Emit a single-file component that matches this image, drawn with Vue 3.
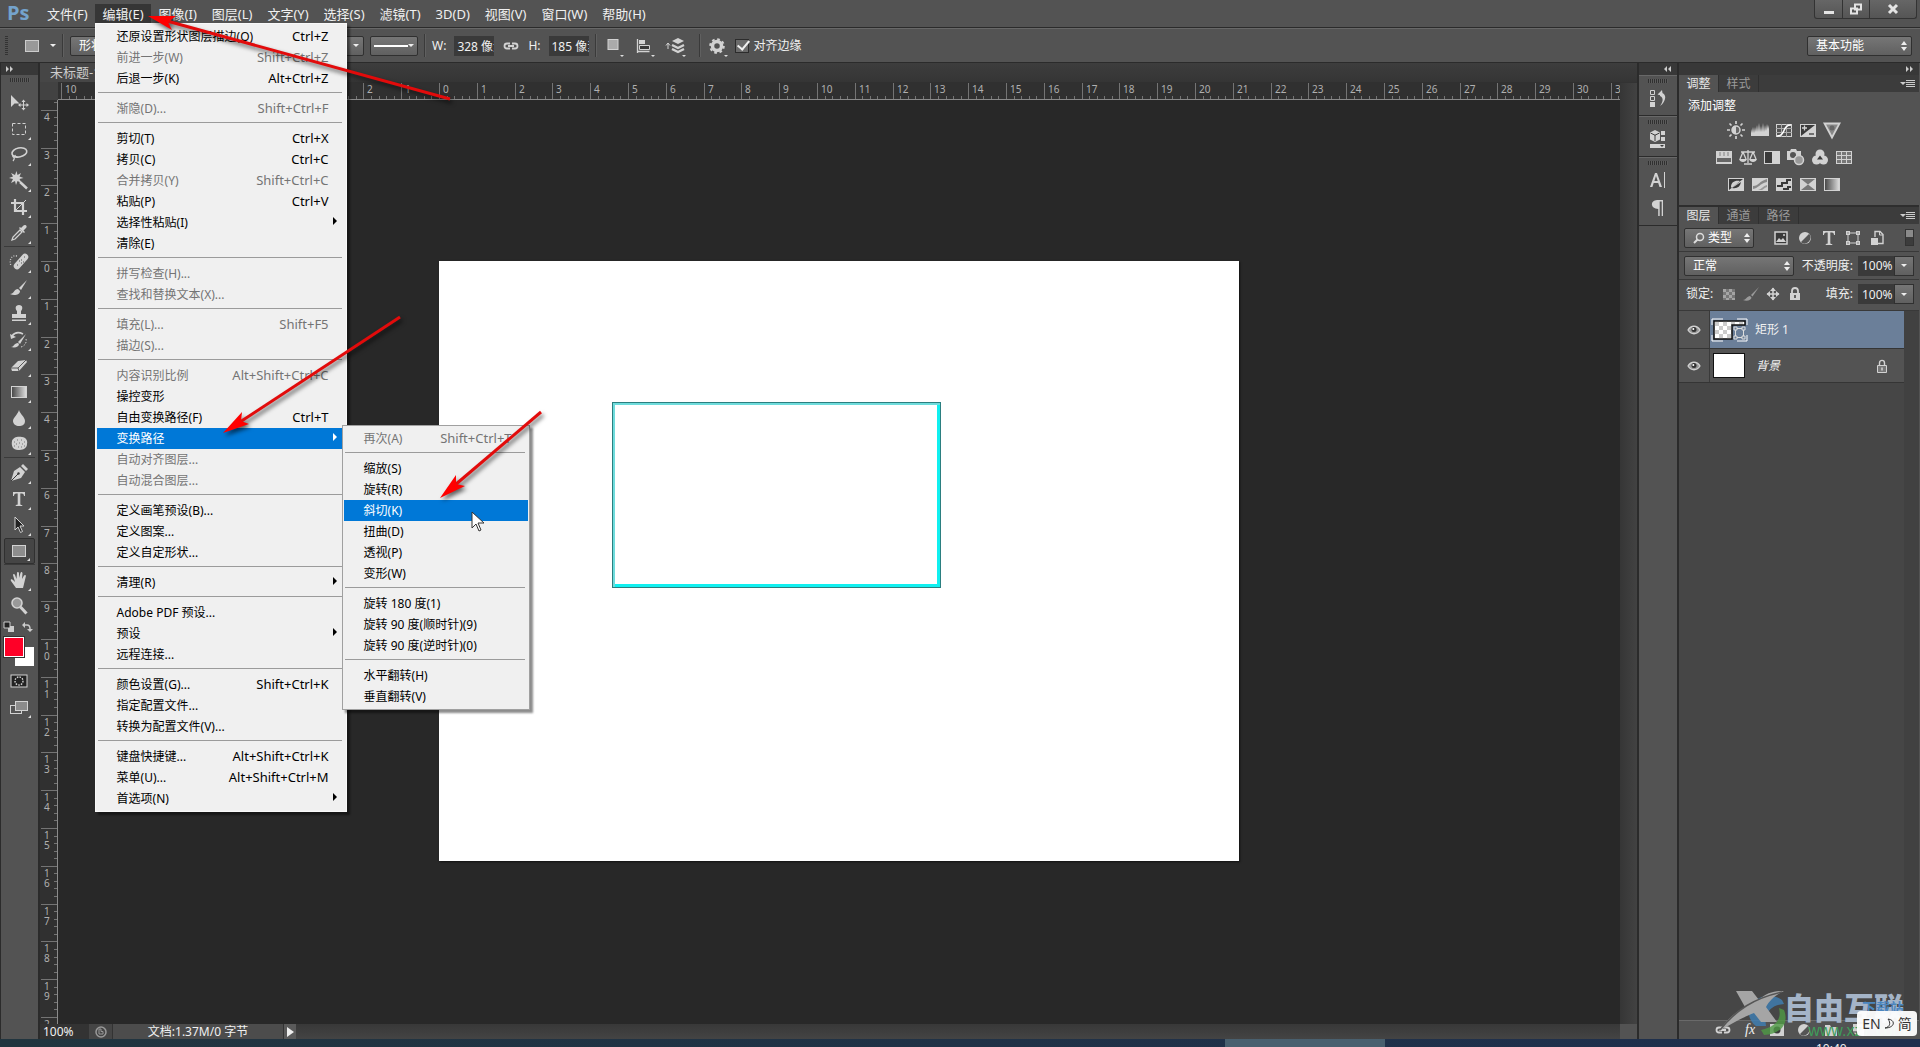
<script setup>
const menusLeft = ['文件(F)']
const menusRight = ['图像(I)', '图层(L)', '文字(Y)', '选择(S)', '滤镜(T)', '3D(D)', '视图(V)', '窗口(W)', '帮助(H)']

const item = (label, keys = '', opts = {}) => ({ label, keys, ...opts })
const off = { disabled: true }

const editMenu = [
  [
    item('还原设置形状图层描边(O)', 'Ctrl+Z'),
    item('前进一步(W)', 'Shift+Ctrl+Z', off),
    item('后退一步(K)', 'Alt+Ctrl+Z')
  ],
  [item('渐隐(D)...', 'Shift+Ctrl+F', off)],
  [
    item('剪切(T)', 'Ctrl+X'),
    item('拷贝(C)', 'Ctrl+C'),
    item('合并拷贝(Y)', 'Shift+Ctrl+C', off),
    item('粘贴(P)', 'Ctrl+V'),
    item('选择性粘贴(I)', '', { arrow: true }),
    item('清除(E)')
  ],
  [item('拼写检查(H)...', '', off), item('查找和替换文本(X)...', '', off)],
  [item('填充(L)...', 'Shift+F5', off), item('描边(S)...', '', off)],
  [
    item('内容识别比例', 'Alt+Shift+Ctrl+C', off),
    item('操控变形'),
    item('自由变换路径(F)', 'Ctrl+T'),
    item('变换路径', '', { arrow: true, active: true, sub: true }),
    item('自动对齐图层...', '', off),
    item('自动混合图层...', '', off)
  ],
  [item('定义画笔预设(B)...'), item('定义图案...'), item('定义自定形状...')],
  [item('清理(R)', '', { arrow: true })],
  [item('Adobe PDF 预设...'), item('预设', '', { arrow: true }), item('远程连接...')],
  [item('颜色设置(G)...', 'Shift+Ctrl+K'), item('指定配置文件...'), item('转换为配置文件(V)...')],
  [
    item('键盘快捷键...', 'Alt+Shift+Ctrl+K'),
    item('菜单(U)...', 'Alt+Shift+Ctrl+M'),
    item('首选项(N)', '', { arrow: true })
  ]
]

const transformMenu = [
  [item('再次(A)', 'Shift+Ctrl+T', off)],
  [
    item('缩放(S)'),
    item('旋转(R)'),
    item('斜切(K)', '', { active: true }),
    item('扭曲(D)'),
    item('透视(P)'),
    item('变形(W)')
  ],
  [item('旋转 180 度(1)'), item('旋转 90 度(顺时针)(9)'), item('旋转 90 度(逆时针)(0)')],
  [item('水平翻转(H)'), item('垂直翻转(V)')]
]

const L = '#d2d2d2'
const D = '#3a3a3a'
const icons = {
  move: `<path d="M2 2v12l3.500-3.500h5z" fill="${L}"/><path d="M14.500 8v8M10.500 12h8" stroke="${L}" fill="none"/><path d="M14.500 6.500l-2 2.500h4zM14.500 17.500l-2-2.500h4zM9 12l2.500-2v4zM20 12l-2.500-2v4z" fill="${L}"/>`,
  marquee: `<rect x="3.500" y="4.500" width="13" height="11" fill="none" stroke="${L}" stroke-dasharray="3 2"/>`,
  lasso: `<ellipse cx="10.500" cy="7.500" rx="7.500" ry="4.500" transform="rotate(-12 10 8)" fill="none" stroke="${L}" stroke-width="1.600"/><path d="M4 10c-1 3 3 3 2 0M5 12c1 2 0 3-1 4" fill="none" stroke="${L}" stroke-width="1.300"/>`,
  wand: `<path d="M7.500 0l1 4 3.500-2-1.500 3.500 4 1.500-4 1 2 4-4-2-1.500 4-1-4-4 2 2-4-4-1 4-1.500-2-3.500 4 2z" fill="${L}"/><path d="M11 11l7 6.500" stroke="${L}" stroke-width="2.400"/>`,
  crop: `<path d="M2 6h12v12M6 2v12h12" fill="none" stroke="${L}" stroke-width="2.200"/><path d="M7 13l10-10" stroke="${L}"/>`,
  eyedrop: `<path d="M3 17l1-3 7-7 2 2-7 7z" fill="none" stroke="${L}" stroke-width="1.300"/><path d="M10 5l5 5 1-1-1.500-1.500L17 5c2-2-1-4-2.500-2.500L12 5l-1-1z" fill="${L}"/>`,
  heal: `<path d="M8 14L16 5" stroke="${L}" stroke-width="6.500" stroke-linecap="round"/><path d="M10 9h1M12 11h1M12 8h1M14 10h1M8 13h1M15 5h1" stroke="#555"/><path d="M8 4C2 3 0 8 2 14" fill="none" stroke="${L}" stroke-dasharray="1 1.500" stroke-width="1.300"/>`,
  brush: `<path d="M18 2l-8 8 2 2z" fill="${L}"/><path d="M1 16c4 0 4-5 8-5l2 2c0 4-6 5-10 3z" fill="${L}"/>`,
  stamp: `<path d="M10 1c4 0 4 4 2 6v3h5v4H3v-4h5V7C6 5 6 1 10 1z" fill="${L}"/><rect x="3" y="15.500" width="14" height="1.500" fill="${L}"/>`,
  history: `<path d="M17 4l-8 8 2 2zM2 17c3 0 3-4 7-4l1 1c0 3-4 4-8 3z" fill="${L}"/><path d="M3 6c3-4 7-4 11-2" fill="none" stroke="${L}" stroke-width="1.600"/><path d="M1 4l1 5 5-2z" fill="${L}"/><path d="M17 9c1 3-1 7-5 8" fill="none" stroke="${L}" stroke-dasharray="1.500 1.500"/>`,
  eraser: `<path d="M9 5l8-1 1 2-8 9H3l-1-3z" fill="${L}"/><path d="M2 12h7l8-8M9 12l1 3" fill="none" stroke="${D}" stroke-width=".8"/>`,
  gradient: `<defs><linearGradient id="tg"><stop stop-color="#444"/><stop offset="1" stop-color="#e0e0e0"/></linearGradient></defs><rect x="2.500" y="4.500" width="15" height="11" fill="url(#tg)" stroke="${L}"/>`,
  blur: `<path d="M10 2c1 4 6 7 6 11s-3 5-6 5-6-2-6-5 5-7 6-11z" fill="${L}"/>`,
  sponge: `<path d="M3 7c1-4 6-5 10-4 4 0 6 4 5 7 0 5-5 6-9 6-5 0-7-4-6-9z" fill="${L}"/><path d="M5 8h1M8 6h1M12 6h1M15 8h1M7 10h1M10 9h1M13 10h1M5 12h1M9 13h1M12 13h1M15 12h1" stroke="#777"/>`,
  pen: `<path d="M2 18l3-10 6-4 5 5-4 6z" fill="${L}"/><path d="M12 3l2-2 5 5-2 2z" fill="${L}"/><path d="M2 18l7-7" stroke="${D}"/><circle cx="9.500" cy="10.500" r="1.200" fill="${D}"/>`,
  type: `<path d="M4 3h12v4h-1c0-2-1-2.500-3.700-2.500V15c0 1 1 1 2 1.200v.8H6.700v-.8c1-.2 2-.2 2-1.200V4.500C6 4.500 5 5 5 7H4z" fill="${L}"/>`,
  select: `<path d="M6 2v13l3-3 2.500 5.500 2-1L11 11h4z" fill="#222" stroke="${L}"/>`,
  rect: `<rect x="3.500" y="4.500" width="13" height="11" fill="#8d8d8d" stroke="${L}"/>`,
  hand: `<path d="M7 18L2 11c-1-2 1-2 2-1l2 2-2-7c0-1.500 1.500-1.500 2 0l1.500 4L8 3c0-1.500 1.800-1.500 2 0v5l1.500-5c.5-1.500 2-1 2 .5L13 9l2-3.500c1-1.200 2.200-.5 1.800 1L15 14l-1 4z" fill="${L}"/>`,
  zoom: `<circle cx="8" cy="7" r="5" fill="#999" stroke="${L}" stroke-width="1.600"/><path d="M11.500 11l6 6.500" stroke="${L}" stroke-width="3"/>`,
  mask: `<rect x="2" y="4" width="16" height="12" fill="#222" stroke="${L}"/><circle cx="10" cy="10" r="4" fill="none" stroke="${L}" stroke-width="1.400" stroke-dasharray="1.500 1.200"/>`,
  screen: `<rect x="1.500" y="8.500" width="11" height="8" fill="#555" stroke="${L}"/><rect x="6.500" y="4.500" width="12" height="9" fill="#8b8b8b" stroke="${L}"/>`,
  // collapsed dock
  hist: `<path d="M2.500 2.500h4v4h-4zM2.500 8.500h4v4h-4z" fill="none" stroke="${L}"/><path d="M2 14h5v5H2z" fill="${L}"/><path d="M9.500 6.500L14 2l1 6zM12 5c7-1 7 8 0 13 3-4 4-8 0-10z" fill="${L}"/>`,
  props: `<path d="M7 1l5 2.500v7L7 13l-5-2.500v-7z" fill="${L}"/><path d="M2.500 4L7 6.200 11.500 4M7 6v6" stroke="${D}" fill="none"/><path d="M13 2h4v4h-4zM13 8h4v4h-4zM2 15h15v4H2z" fill="${L}"/><path d="M12 16h4l-2 2z" fill="${D}"/>`,
  char: `<path d="M2 17L7 3h2l5 14h-2.500l-1.300-4H5.700l-1.300 4zM6.400 11h3.300L8 6z" fill="${L}"/><path d="M16.500 2v16" stroke="${L}"/>`,
  para: `<path d="M9 2h6v16h-1.300V3.500h-2V18h-1.500v-7C2 11 2 2 9 2z" fill="${L}"/>`,
  // adjustments
  bright: `<circle cx="10" cy="10" r="4" fill="#666" stroke="${L}" stroke-width="1.500"/><path d="M10 6a4 4 0 0 0 0 8z" fill="${L}"/><path d="M10 1v3M10 16v3M1 10h3M16 10h3M3.500 3.500l2 2M14.500 14.500l2 2M3.500 16.500l2-2M14.500 5.500l2-2" stroke="${L}" stroke-width="1.700"/>`,
  levels: `<path d="M1 16V9l1 4 1-6 1 6 1-6 1 5 1-7 1 7 1-9 1 9 1-6 1 6 1-9 1 9 1-7 1 6 1-7 1 5 1-4v11z" fill="${L}"/>`,
  curves: `<rect x="2.500" y="4.500" width="15" height="12" fill="none" stroke="${L}"/><path d="M2 8.500h16M2 12.500h16M7.500 4v13M12.500 4v13" stroke="#aaa"/><path d="M3 16c9 0 5-11 14-11" fill="none" stroke="#fff" stroke-width="1.600"/>`,
  expo: `<rect x="2.500" y="4.500" width="15" height="12" fill="${D}" stroke="${L}"/><path d="M17 5v11H3z" fill="${L}"/><path d="M4 8h5M6.500 5.500v5" stroke="${L}" stroke-width="1.300"/><path d="M11 14h5" stroke="${D}" stroke-width="1.300"/>`,
  vib: `<path d="M2.500 3.500h15L10 17.500z" fill="#888" stroke="${L}" stroke-width="1.800"/><circle cx="10" cy="8" r="2.500" fill="#666"/>`,
  hue: `<rect x="2" y="4" width="16" height="13" fill="${L}"/><path d="M5 5h2v4H5zM9 5h2v4H9zM13 5h2v4h-2z" fill="#aaa"/><path d="M3 11h14v4H3z" fill="#666"/>`,
  balance: `<path d="M10 3v13M6 17h8M3 5h14M5 5l-3 7M5 5l3 7M15 5l-3 7M15 5l3 7" fill="none" stroke="${L}" stroke-width="1.300"/><path d="M1 12h8c-1 4-7 4-8 0zM11 12h8c-1 4-7 4-8 0z" fill="${L}"/>`,
  bw: `<rect x="2.500" y="4.500" width="15" height="12" fill="${D}" stroke="${L}"/><path d="M10 5h7v11h-7z" fill="${L}"/>`,
  photo: `<path d="M1 4h3l1-2h5l1 2h4v9H1z" fill="${L}"/><circle cx="7" cy="8" r="3" fill="#555"/><circle cx="13" cy="13" r="4.500" fill="#999" stroke="${L}" stroke-width="1.500"/>`,
  mixer: `<circle cx="10" cy="7" r="4.500" fill="${L}"/><circle cx="6.500" cy="13" r="4.500" fill="${L}"/><circle cx="13.500" cy="13" r="4.500" fill="${L}"/><path d="M10 8.500l3 4h-6z" fill="${D}"/>`,
  lookup: `<rect x="2.500" y="4.500" width="15" height="12" fill="#777" stroke="${L}"/><path d="M2 8.500h16M2 12.500h16M7.500 4v13M12.500 4v13" stroke="${L}"/>`,
  invert: `<rect x="2.500" y="4.500" width="15" height="12" fill="${D}" stroke="${L}"/><path d="M3 16L17 5v11z" fill="${L}"/><path d="M5 13c0-5 4-7 9-6l-8 7z" fill="${L}"/><path d="M6 14c5 1 8-1 9-6z" fill="${D}"/>`,
  poster: `<rect x="2.500" y="4.500" width="15" height="12" fill="${L}" stroke="${L}"/><path d="M3 12c6 0 6-5 14-7v3c-8 2-8 6-14 7z" fill="#888"/><path d="M8 16c4-1 5-4 9-5v2c-3 1-3 2-5 3z" fill="#999"/>`,
  thresh: `<rect x="2.500" y="4.500" width="15" height="12" fill="${L}" stroke="${L}"/><path d="M3 11h4V8h5V5h5v2h-3v3h-5v3H3zM9 16v-2h4v-2h4v2h-2v2z" fill="${D}"/>`,
  selcol: `<rect x="2.500" y="4.500" width="15" height="12" fill="#777" stroke="${L}"/><path d="M3 5v11l7-5.500zM17 5v11l-7-5.500z" fill="${L}"/>`,
  gmap: `<rect x="2.500" y="4.500" width="15" height="12" fill="url(#tg)" stroke="${L}"/>`,
  // layer filters and locks
  image: `<path d="M4 4h12v12H4z" fill="${D}" stroke="${L}" stroke-width="1.500"/><path d="M5 14l3-4 2 2 2-2 3 4z" fill="${L}"/><circle cx="13" cy="7" r="1" fill="${L}"/>`,
  adjust: `<circle cx="10" cy="10" r="6" fill="${L}"/><path d="M14.200 5.800a6 6 0 0 1-8.400 8.400z" fill="#555"/>`,
  vector: `<path d="M5 5h10v10H5z" fill="none" stroke="${L}"/><path d="M3 3h4v4H3zM13 3h4v4h-4zM3 13h4v4H3zM13 13h4v4h-4z" fill="${L}"/><path d="M4.500 4.500h1v1h-1zM14.500 4.500h1v1h-1zM4.500 14.500h1v1h-1zM14.500 14.500h1v1h-1z" fill="${D}"/>`,
  smart: `<path d="M8 9V3.500h5l3 3v9h-5" fill="none" stroke="${L}" stroke-width="1.400"/><path d="M12.500 4v3H16" fill="none" stroke="${L}"/><path d="M4 10h7v7H4z" fill="${L}"/>`,
  pixels: `<path d="M4 5h12v11H4z" fill="#777"/><path d="M4 5h3v3H4zM10 5h3v3h-3zM7 8h3v3H7zM13 8h3v3h-3zM4 11h3v3H4zM10 11h3v3h-3zM7 14h3v2H7zM13 14h3v2h-3z" fill="#a4a4a4"/>`,
  lockbrush: `<path d="M18 3l-8 8 1.500 1.500z" fill="#9a9a9a"/><path d="M2 16c3 0 4-4 7-4l1.500 1.500c0 3-5 4-8.500 2.500z" fill="#9a9a9a"/>`,
  lockmove: `<path d="M10 4v12M4 10h12" stroke="${L}" stroke-width="1.500"/><path d="M10 3.500L7 7h6zM10 16.500L7 13h6zM3.500 10L7 7v6zM16.500 10L13 7v6z" fill="${L}"/>`,
  lock: `<path d="M7 10V7c0-4 6-4 6 0v3" fill="none" stroke="${L}" stroke-width="1.800"/><path d="M5 9h10v7H5z" fill="${L}"/><path d="M10 11v3" stroke="${D}" stroke-width="1.500"/>`,
  layerlock: `<path d="M7.500 10V7c0-3.500 5-3.500 5 0v3" fill="none" stroke="${L}" stroke-width="1.400"/><path d="M5.500 9.500h9v7h-9z" fill="#777" stroke="${L}"/><path d="M10 11.500v3" stroke="${L}" stroke-width="1.500"/>`,
  eye: `<path d="M4 10c3-5 9-5 12 0-3 5-9 5-12 0z" fill="#999" stroke="${L}" stroke-width="1.300"/><circle cx="10" cy="9.500" r="2.500" fill="#333"/><circle cx="9.300" cy="9" r="1" fill="#fff"/>`,
  link: `<path d="M9 7.500H6a2.500 2.500 0 0 0 0 5h3M11 7.500h3a2.500 2.500 0 0 1 0 5h-3M7 10h6" fill="none" stroke="${L}" stroke-width="1.800"/>`,
  lmask: `<path d="M3 4h14v12H3z" fill="${L}"/><circle cx="10" cy="10" r="3.500" fill="${D}"/>`,
  folder: `<path d="M4 5h5l1 2h6v9H4z" fill="${L}"/>`,
  page: `<path d="M5 4h11v12H9l-4-4z" fill="${L}"/><path d="M5 12h4v4" fill="none" stroke="${D}"/>`,
  square: `<rect x="5" y="3.500" width="10" height="10" fill="#aaa" stroke="${L}"/>`,
  align: `<path d="M3.500 3v14M3.500 15.500h12" stroke="${L}" stroke-width="1.300" fill="none"/><path d="M5 4h6v4H5z" fill="${L}"/><path d="M5.500 9.500h10v4h-10z" fill="${D}" stroke="${L}"/>`,
  stack: `<path d="M13 2l6 3-6 3-6-3z" fill="${L}"/><path d="M7 9l6 3 6-3M7 13l6 3 6-3" fill="none" stroke="${L}" stroke-width="2.400"/><path d="M3 7v6M1 9.500L3 7l2 2.500" fill="none" stroke="${L}"/>`,
  gear: `<circle cx="10" cy="10" r="4.500" fill="none" stroke="${L}" stroke-width="3.500"/><circle cx="10" cy="10" r="6.800" fill="none" stroke="${L}" stroke-width="2" stroke-dasharray="2.700 2.640"/>`
}

const toolGroups = [
  ['move', 'marquee', 'lasso', 'wand', 'crop', 'eyedrop'],
  ['heal', 'brush', 'stamp', 'history', 'eraser', 'gradient', 'blur', 'sponge'],
  ['pen', 'type', 'select', 'rect'],
  ['hand', 'zoom']
]
const noCorner = ['move', 'zoom']
const dockGroups = [['hist'], ['props'], ['char', 'para']]
const adjustRows = [
  ['bright', 'levels', 'curves', 'expo', 'vib'],
  ['hue', 'balance', 'bw', 'photo', 'mixer', 'lookup'],
  ['invert', 'poster', 'thresh', 'selcol', 'gmap']
]

// One centimetre of document spans 37.8 screen pixels at 100% zoom.
const CM = 37.8
function ruler(from, to, zero) {
  const marks = []
  const minors = []
  for (let n = from; n <= to; n++) {
    marks.push({ at: Math.round(zero + n * CM), label: String(Math.abs(n)) })
    for (let k = 1; k < 5; k++) minors.push(Math.round(zero + (n + k / 5) * CM))
  }
  return { marks, minors }
}
const hRuler = ruler(-10, 31, 381)
const vRuler = ruler(-5, 20, 161)

function arrow(x1, y1, x2, y2) {
  const len = Math.hypot(x2 - x1, y2 - y1)
  const ux = (x2 - x1) / len
  const uy = (y2 - y1) / len
  const p = (back, side) => `${Math.round(x2 - ux * back - uy * side)},${Math.round(y2 - uy * back + ux * side)}`
  return {
    head: [p(0, 0), p(27, 7), p(21, 0), p(27, -7)].join(' '),
    x1, y1,
    x2: Math.round(x2 - ux * 20),
    y2: Math.round(y2 - uy * 20)
  }
}
const arrows = [arrow(450, 99, 148, 16), arrow(400, 317, 223, 433), arrow(541, 412, 440, 498)]
</script>

<template>
  <div class="app">
    <header class="menubar">
      <span class="logo">Ps</span>
      <nav class="menus">
        <button v-for="m in menusLeft" :key="m" class="menu">{{ m }}</button>
        <div class="menu-host">
          <button class="menu open">编辑(E)</button>
          <div class="popup edit-popup">
            <ul v-for="(group, g) in editMenu" :key="g" class="group">
              <li v-for="it in group" :key="it.label" class="row">
                <button class="entry" :class="{ active: it.active }" :disabled="it.disabled">
                  <span>{{ it.label }}</span>
                  <span class="keys">{{ it.keys }}</span>
                  <svg v-if="it.arrow" class="more" viewBox="0 0 4 8"><path d="M0 0l4 4-4 4z" fill="currentColor" /></svg>
                </button>
                <div v-if="it.sub" class="popup sub-popup">
                  <ul v-for="(sg, s) in transformMenu" :key="s" class="group">
                    <li v-for="st in sg" :key="st.label" class="row">
                      <button class="entry" :class="{ active: st.active }" :disabled="st.disabled">
                        <span>{{ st.label }}</span>
                        <span class="keys">{{ st.keys }}</span>
                      </button>
                    </li>
                  </ul>
                </div>
              </li>
            </ul>
          </div>
        </div>
        <button v-for="m in menusRight" :key="m" class="menu">{{ m }}</button>
      </nav>
      <div class="win-buttons">
        <button class="win" aria-label="最小化"><svg width="12" height="12" viewBox="0 0 12 12"><path d="M1 8h10v3H1z" fill="#e4e4e4" /></svg></button>
        <button class="win" aria-label="还原"><svg width="12" height="12" viewBox="0 0 12 12"><path d="M5 1.500h6v5H5zM1 5.500h6v5H1z" fill="#555" stroke="#e4e4e4" stroke-width="2" /></svg></button>
        <button class="win close" aria-label="关闭"><svg width="12" height="12" viewBox="0 0 12 12"><path d="M2 2l8 8M10 2l-8 8" stroke="#e4e4e4" stroke-width="3" /></svg></button>
      </div>
    </header>

    <section class="options">
      <span class="grip-v"></span>
      <svg class="preset" viewBox="0 0 14 12"><rect x=".5" y=".5" width="13" height="11" fill="#999" stroke="#ccc" /></svg>
      <span class="caret"></span>
      <span class="vsep"></span>
      <label class="drop mode"><select aria-label="工具模式"><option>形状</option></select></label>
      <label class="drop stroke-width"><select aria-label="描边宽度"><option></option></select><span class="caret"></span></label>
      <label class="drop stroke-type"><select aria-label="描边类型"><option></option></select><span class="line"></span><span class="caret"></span></label>
      <span class="vsep"></span>
      <label class="dim">W:<input value="328 像素" /></label>
      <svg class="ico link-ico" viewBox="0 0 20 20" v-html="icons.link"></svg>
      <label class="dim">H:<input value="185 像素" /></label>
      <span class="vsep"></span>
      <button v-for="i in ['square', 'align', 'stack']" :key="i" class="opt" :aria-label="i"><svg class="ico" viewBox="0 0 20 20" v-html="icons[i]"></svg><i class="dot"></i></button>
      <span class="vsep"></span>
      <button class="opt" aria-label="gear"><svg class="ico" viewBox="0 0 20 20" v-html="icons.gear"></svg><i class="dot"></i></button>
      <label class="check"><input type="checkbox" checked />对齐边缘</label>
      <label class="drop workspace-drop"><select aria-label="工作区"><option>基本功能</option></select><span class="updown"></span></label>
    </section>

    <main class="work">
      <aside class="tools">
        <div class="strip left"><svg width="8" height="6" viewBox="0 0 8 6"><path d="M0 0l3 3-3 3zM4 0l3 3-3 3z" fill="#ccc" /></svg></div>
        <div class="grip"></div>
        <div v-for="(group, g) in toolGroups" :key="g" class="tool-group">
          <button v-for="t in group" :key="t" class="tool" :class="{ on: t === 'rect' }" :aria-label="t">
            <svg class="ico" viewBox="0 0 20 20" v-html="icons[t]"></svg>
            <i v-if="!noCorner.includes(t)" class="corner"></i>
          </button>
        </div>
        <div class="mini">
          <svg width="12" height="12" viewBox="0 0 12 12"><path d="M5 5h6v6H5z" fill="#ccc" /><path d="M1 1h6v6H1z" fill="#222" stroke="#ccc" /></svg>
          <svg width="12" height="12" viewBox="0 0 12 12"><path d="M2 4h4c2 0 3 1 3 4" fill="none" stroke="#ccc" stroke-width="1.500" /><path d="M4 1L1 4l3 3zM6 8h6l-3 3z" fill="#ccc" /></svg>
        </div>
        <div class="swatches"><span class="bg"></span><span class="fg"></span></div>
        <button class="tool" aria-label="mask"><svg class="ico" viewBox="0 0 20 20" v-html="icons.mask"></svg></button>
        <button class="tool" aria-label="screen"><svg class="ico" viewBox="0 0 20 20" v-html="icons.screen"></svg><i class="corner"></i></button>
      </aside>

      <section class="doc">
        <div class="tabs"><button class="doc-tab">未标题-1 @ 100%</button></div>
        <div class="view">
          <div class="corner-box"></div>
          <svg class="h-ruler">
            <rect class="ruler-line" x="0" y="17" width="100%" height="1" />
            <rect v-for="x in hRuler.minors" :key="'m' + x" class="tick" :x="x" y="14" width="1" height="3" />
            <g v-for="m in hRuler.marks" :key="m.at">
              <rect class="tick" :x="m.at" y="1" width="1" height="16" />
              <text :x="m.at + 4" y="11">{{ m.label }}</text>
            </g>
          </svg>
          <div class="v-scroll"></div>
          <svg class="v-ruler">
            <rect class="ruler-line" x="17" y="0" width="1" height="100%" />
            <rect v-for="y in vRuler.minors" :key="'m' + y" class="tick" x="14" :y="y" width="3" height="1" />
            <g v-for="m in vRuler.marks" :key="m.at">
              <rect class="tick" x="1" :y="m.at" width="16" height="1" />
              <text v-for="(c, i) in m.label" :key="i" x="4" :y="m.at + 11 + i * 10">{{ c }}</text>
            </g>
          </svg>
          <div class="canvas"><div class="artboard"><div class="shape"></div></div></div>
        </div>
        <footer class="status">
          <span class="zoom">100%</span>
          <span class="badge"><svg width="12" height="12" viewBox="0 0 12 12"><circle cx="6" cy="6" r="5" fill="none" stroke="#999" stroke-width="1.500" /><path d="M4 3v5h4V5.500H6V3z" fill="none" stroke="#999" /></svg></span>
          <span class="info">文档:1.37M/0 字节</span>
          <button class="go" aria-label="更多"><svg width="7" height="10" viewBox="0 0 7 10"><path d="M0 0l7 5-7 5z" fill="#eee" /></svg></button>
          <span class="h-scroll"></span>
          <span class="nook"></span>
        </footer>
      </section>

      <aside class="dock">
        <div class="strip right"><svg width="8" height="6" viewBox="0 0 8 6"><path d="M3 0L0 3l3 3zM7 0L4 3l3 3z" fill="#ccc" /></svg></div>
        <div v-for="(group, g) in dockGroups" :key="g" class="dock-group">
          <div class="grip"></div>
          <button v-for="d in group" :key="d" class="dock-btn" :aria-label="d"><svg class="ico" viewBox="0 0 20 20" v-html="icons[d]"></svg></button>
        </div>
      </aside>

      <aside class="panels">
        <div class="strip right"><svg width="8" height="6" viewBox="0 0 8 6"><path d="M0 0l3 3-3 3zM4 0l3 3-3 3z" fill="#ccc" /></svg></div>
        <div class="ptabs"><button class="ptab on">调整</button><button class="ptab">样式</button><span class="pmenu"></span></div>
        <div class="adjust">
          <p class="add">添加调整</p>
          <div v-for="(r, k) in adjustRows" :key="k" class="adj-row">
            <button v-for="a in r" :key="a" class="adj" :aria-label="a"><svg class="ico" viewBox="0 0 20 20" v-html="icons[a]"></svg></button>
          </div>
        </div>
        <div class="ptabs"><button class="ptab on">图层</button><button class="ptab">通道</button><button class="ptab">路径</button><span class="pmenu"></span></div>
        <div class="prow">
          <label class="drop kind"><svg width="12" height="12" viewBox="0 0 12 12"><circle cx="7" cy="5" r="3.500" fill="none" stroke="#ddd" stroke-width="1.500" /><path d="M4.500 7.500L1 11" stroke="#ddd" stroke-width="2" /></svg><select aria-label="筛选"><option>类型</option></select><span class="updown"></span></label>
          <div class="filters">
            <button v-for="f in ['image', 'adjust', 'type', 'vector', 'smart']" :key="f" class="adj" :aria-label="f"><svg class="ico" viewBox="0 0 20 20" v-html="icons[f]"></svg></button>
          </div>
          <span class="toggle"></span>
        </div>
        <div class="prow">
          <label class="drop blend"><select aria-label="混合模式"><option>正常</option></select><span class="updown"></span></label>
          <label class="pct">不透明度:<input value="100%" /><span class="pct-btn"><span class="caret"></span></span></label>
        </div>
        <div class="prow lock-row">
          <span class="lock-label">锁定:</span>
          <div class="locks">
            <button v-for="l in ['pixels', 'lockbrush', 'lockmove', 'lock']" :key="l" class="adj" :aria-label="l"><svg class="ico" viewBox="0 0 20 20" v-html="icons[l]"></svg></button>
          </div>
          <label class="pct">填充:<input value="100%" /><span class="pct-btn"><span class="caret"></span></span></label>
        </div>
        <div class="layers">
          <div class="layer-list">
            <div class="layer tall">
              <span class="vis"><svg class="ico" viewBox="0 0 20 20" v-html="icons.eye"></svg></span>
              <div class="layer-body selected">
                <svg width="37" height="24" viewBox="0 0 37 24">
                  <defs><pattern id="chk" width="8" height="8" patternUnits="userSpaceOnUse"><path d="M0 0h8v8H0z" fill="#fff" /><path d="M0 0h4v4H0zM4 4h4v4H4z" fill="#ccc" /></pattern></defs>
                  <path d="M3 3h31v4H21v14H3z" fill="url(#chk)" stroke="#111" stroke-width="1.500" />
                  <path d="M1 7V1h11M26 1h10v6M36 17v6H26M12 23H1v-6" fill="none" stroke="#fff" />
                  <path d="M24.500 10.500h8v9h-8z" fill="#6b7f99" stroke="#ddd" />
                  <path d="M23 9h3v3h-3zM31 9h3v3h-3zM23 18h3v3h-3zM31 18h3v3h-3z" fill="#6b7f99" stroke="#ddd" />
                </svg>
                <span>矩形 1</span>
              </div>
            </div>
            <div class="layer">
              <span class="vis"><svg class="ico" viewBox="0 0 20 20" v-html="icons.eye"></svg></span>
              <div class="layer-body">
                <span class="thumb"></span>
                <em>背景</em>
                <svg class="ico end" viewBox="0 0 20 20" v-html="icons.layerlock"></svg>
              </div>
            </div>
          </div>
          <div class="layer-scroll"></div>
        </div>
        <footer class="pfoot">
          <svg class="ico" viewBox="0 0 20 20" v-html="icons.link"></svg>
          <em class="fx">fx</em>
          <svg v-for="f in ['lmask', 'adjust', 'folder', 'page']" :key="f" class="ico" viewBox="0 0 20 20" v-html="icons[f]"></svg>
        </footer>
      </aside>
    </main>

    <footer class="taskbar"><span class="task"></span><span class="clock">10:40</span></footer>

    <div class="watermark">
      <svg class="feather" width="88" height="48" viewBox="0 0 88 48">
        <path d="M40 36A20 17 0 0 1 66 10l2 4C54 15 48 24 50 36z" fill="#3f7fb5" opacity=".8" />
        <path d="M48 45c14 0 26-10 20-25l-5-2c3 12-4 19-18 22z" fill="#4f9a45" opacity=".8" />
        <path d="M20 1h16l7 9c7-7 15-9 25-9-9 4-14 9-18 16l11 15H45l-7-9C28 27 14 34 2 42 10 31 19 22 29 17z" fill="#a5a5a5" />
        <path d="M4 40C20 20 38 8 66 2" fill="none" stroke="#555" stroke-width="1.500" />
      </svg>
      <span class="wm-name">自由互联</span>
      <span class="wm-sub">下载站</span>
      <span class="wm-url">www.xz7.com</span>
    </div>
    <div class="ime"><span>EN</span><svg width="11" height="12" viewBox="0 0 11 12"><path d="M4 1c8 1 7 9-3 9 5-1 6-5 3-9z" fill="none" stroke="#333" /></svg><span>简</span></div>

    <svg class="marks">
      <g v-for="a in arrows" :key="a.x1">
        <line :x1="a.x1" :y1="a.y1" :x2="a.x2" :y2="a.y2" />
        <polygon :points="a.head" />
      </g>
      <path class="cursor" d="M472 512v16l4-4 3 7 2-1-3-7h6z" />
    </svg>
  </div>
</template>

<style>
body {
  background: #535353;
}
</style>

<style scoped>
.app,
.app * {
  box-sizing: border-box;
}
.app {
  position: relative;
  display: flex;
  flex-direction: column;
  height: 100vh;
  overflow: hidden;
  font: 12px/16px 'Noto Sans', 'Noto Sans CJK SC', sans-serif;
  color: #f0f0f0;
  background: #535353;
}
button,
input,
select {
  margin: 0;
  padding: 0;
  border: 0;
  background: none;
  color: inherit;
  font: inherit;
  appearance: none;
}
ul,
p {
  margin: 0;
  padding: 0;
  list-style: none;
}
svg {
  display: block;
  flex: none;
}
.ico {
  width: 20px;
  height: 20px;
}

/* menu bar */
.menubar {
  position: relative;
  z-index: 5;
  flex: none;
  display: flex;
  align-items: flex-start;
  height: 28px;
  border-bottom: 1px solid #2b2b2b;
}
.logo {
  width: 39px;
  padding-left: 7px;
  font: bold 20px/26px 'Open Sans', sans-serif;
  color: #74a3cc;
}
.menus {
  display: flex;
  align-items: flex-start;
  flex: 1;
  font-size: 13px;
}
.menu {
  display: block;
  height: 19px;
  margin-top: 4px;
  padding: 0 7px 0 8px;
  line-height: 18px;
  white-space: nowrap;
}
.menu.open {
  background: #363636;
}
.menu-host {
  position: relative;
}
.popup {
  position: absolute;
  padding: 2px 1px;
  border: 1px solid #a0a0a0;
  background: #f0f0f0;
  color: #000;
  font-size: 12px;
  box-shadow: 3px 3px 2px rgba(0, 0, 0, 0.45);
}
.edit-popup {
  left: 0;
  top: 100%;
  width: 252px;
  border-color: #f8f8f8;
}
.sub-popup {
  left: 245px;
  top: -3px;
  width: 188px;
}
.group + .group {
  position: relative;
  padding-top: 9px;
}
.group + .group::before {
  content: '';
  position: absolute;
  left: 1px;
  right: 3px;
  top: 3px;
  height: 1px;
  background: #9b9b9b;
}
.row {
  position: relative;
}
.entry {
  position: relative;
  display: flex;
  justify-content: space-between;
  width: 100%;
  height: 21px;
  padding: 0 16px 0 20px;
  line-height: 21px;
  white-space: nowrap;
}
.entry:disabled {
  color: #747474;
}
.entry.active {
  background: #0078d7;
  color: #fff;
}
.keys {
  font-size: 13px;
}
.more {
  position: absolute;
  right: 8px;
  top: 5px;
  width: 4px;
  height: 8px;
}
.win-buttons {
  display: flex;
  height: 19px;
  margin-right: 3px;
  border: 1px solid #333;
  border-top: 0;
  border-radius: 0 0 3px 3px;
  background: linear-gradient(#666, #555);
}
.win {
  display: flex;
  align-items: center;
  justify-content: center;
  width: 27px;
}
.win + .win {
  border-left: 1px solid #333;
}
.win.close {
  width: 47px;
}

/* options bar */
.options {
  flex: none;
  display: flex;
  align-items: center;
  height: 35px;
  padding: 0 8px 0 5px;
  border-top: 1px solid #686868;
  border-bottom: 1px solid #2b2b2b;
}
.grip-v {
  width: 3px;
  height: 19px;
  background: repeating-linear-gradient(#333 0 1px, #535353 1px 2px);
}
.preset {
  width: 14px;
  height: 12px;
  margin: 0 11px 0 17px;
}
.caret {
  flex: none;
  border: 3px solid transparent;
  border-top-color: #eee;
  border-bottom: 0;
}
.vsep {
  width: 2px;
  height: 23px;
  margin: 0 6px;
  border-left: 1px solid #3a3a3a;
  border-right: 1px solid #606060;
}
.drop {
  display: flex;
  align-items: center;
  height: 20px;
  padding: 0 4px 0 8px;
  border: 1px solid #303030;
  border-radius: 2px;
  background: linear-gradient(#767676, #606060);
  color: #fff;
}
.drop select {
  flex: 1;
  min-width: 0;
}
.mode {
  width: 80px;
}
.stroke-width {
  width: 60px;
  margin: 0 6px 0 154px;
}
.stroke-type {
  width: 48px;
  padding: 0 3px;
}
.stroke-type select {
  width: 0;
  flex: none;
}
.line {
  flex: 1;
  height: 2px;
  background: #fff;
}
.dim {
  display: flex;
  align-items: center;
  gap: 8px;
}
.dim input {
  width: 40px;
  height: 20px;
  padding-left: 3px;
  background: #3a3a3a;
}
.link-ico {
  margin: 0 7px;
}
.opt {
  position: relative;
  margin-right: 8px;
}
.opt:nth-of-type(-n + 2) {
  margin-right: 11px;
}
.dot {
  position: absolute;
  right: -1px;
  bottom: -1px;
  border: 2px solid transparent;
  border-top-color: #ddd;
  border-bottom: 0;
}
.check {
  display: flex;
  align-items: center;
  gap: 5px;
}
.check input {
  width: 14px;
  height: 14px;
  border: 1px solid #2c2c2c;
  background: #6a6a6a;
}
.check input::before {
  content: '';
  display: block;
  width: 5px;
  height: 10px;
  margin-left: 4px;
  border: solid #f0f0f0;
  border-width: 0 2px 2px 0;
  transform: translateY(-2px) rotate(40deg);
}
.workspace-drop {
  width: 105px;
  margin-left: auto;
}
.updown {
  position: relative;
  width: 6px;
  height: 10px;
}
.updown::before,
.updown::after {
  content: '';
  position: absolute;
  left: 0;
  border: 3px solid transparent;
}
.updown::before {
  top: 0;
  border-top: 0;
  border-bottom: 4px solid #eee;
}
.updown::after {
  bottom: 0;
  border-bottom: 0;
  border-top: 4px solid #eee;
}

/* workspace */
.work {
  flex: 1;
  min-height: 0;
  display: flex;
  background: #2b2b2b;
}
.strip {
  flex: none;
  display: flex;
  align-items: center;
  height: 12px;
  padding: 0 5px;
  background: #383838;
}
.strip.right {
  justify-content: flex-end;
}
.grip {
  flex: none;
  width: 20px;
  height: 4px;
  margin: 3px auto;
  background: repeating-linear-gradient(90deg, #303030 0 1px, #5c5c5c 1px 2px);
}

/* tool box */
.tools {
  flex: none;
  width: 38px;
  margin-right: 2px;
  border-left: 1px solid #2b2b2b;
  background: #535353;
}
.tools .grip {
  margin-bottom: 8px;
}
.tool-group + .tool-group {
  border-top: 1px solid #3a3a3a;
  padding-top: 2px;
}
.tool-group {
  margin: 0 3px;
}
.tool {
  position: relative;
  display: flex;
  align-items: center;
  justify-content: center;
  width: 31px;
  height: 26px;
  padding-right: 2px;
}
.tools > .tool {
  margin: 0 3px;
}
.tool.on {
  border: 1px solid #303030;
  border-radius: 2px;
  background: #454545;
}
.corner {
  position: absolute;
  right: 4px;
  bottom: 2px;
  border-left: 3px solid transparent;
  border-bottom: 3px solid #ddd;
}
.mini {
  display: flex;
  justify-content: space-between;
  height: 18px;
  padding: 2px 5px 0 2px;
}
.swatches {
  position: relative;
  height: 31px;
}
.fg,
.bg {
  position: absolute;
}
.fg {
  left: 3px;
  top: 0;
  width: 20px;
  height: 20px;
  border: 1px solid #fff;
  outline: 1px solid #333;
  background: #fe0027;
}
.bg {
  left: 14px;
  top: 10px;
  width: 19px;
  height: 19px;
  background: #fff;
}

/* document */
.doc {
  flex: 1;
  min-width: 0;
  display: flex;
  flex-direction: column;
}
.tabs {
  flex: none;
  display: flex;
  height: 19px;
  background: linear-gradient(#3d3d3d, #353535);
}
.doc-tab {
  padding: 0 10px;
  background: #464646;
  color: #ccc;
  font-size: 13px;
  line-height: 19px;
}
.view {
  flex: 1;
  min-height: 0;
  display: grid;
  grid-template: 18px minmax(0, 1fr) / 18px minmax(0, 1fr) 17px;
}
.corner-box {
  background: #424242;
}
.h-ruler,
.v-ruler {
  width: 100%;
  height: 100%;
  background: #303030;
  font-size: 10px;
}
.h-ruler text,
.v-ruler text {
  fill: #b0b0b0;
}
.tick {
  fill: #747474;
}
.ruler-line {
  fill: #8a8a8a;
}
.v-scroll {
  grid-column: 3;
  grid-row: 1 / 3;
  border-top: 1px solid #333;
  background: linear-gradient(90deg, #363636, #424242);
}
.v-ruler {
  grid-column: 1;
  grid-row: 2;
}
.canvas {
  position: relative;
  overflow: hidden;
  background: #282828;
}
.artboard {
  position: absolute;
  left: 381px;
  top: 161px;
  width: 800px;
  height: 600px;
  background: #fff;
  box-shadow: 1px 1px 2px rgba(0, 0, 0, 0.6);
}
.shape {
  position: absolute;
  left: 173px;
  top: 141px;
  width: 329px;
  height: 186px;
  border: 1px solid #2b7f80;
  box-shadow: inset 2px 2px #6fdcdc, inset -3px -3px #10f0f0;
}
.status {
  flex: none;
  display: flex;
  height: 15px;
  line-height: 15px;
  background: #333;
}
.zoom {
  width: 49px;
  padding-left: 3px;
}
.badge {
  display: flex;
  align-items: center;
  justify-content: center;
  width: 24px;
  background: #454545;
  border-right: 1px solid #333;
}
.info {
  width: 170px;
  background: #4c4c4c;
  text-align: center;
  white-space: nowrap;
}
.go {
  display: flex;
  align-items: center;
  justify-content: center;
  width: 13px;
  border-left: 1px solid #333;
  background: #5a5a5a;
}
.h-scroll {
  flex: 1;
  background: linear-gradient(#383838, #444);
}
.nook {
  width: 17px;
  background: #535353;
}

/* collapsed dock */
.dock {
  flex: none;
  width: 38px;
  margin-left: 2px;
  background: #535353;
}
.dock-group {
  padding-bottom: 5px;
  border-top: 1px solid #686868;
  border-bottom: 1px solid #2b2b2b;
}
.dock-group .grip {
  margin: 3px auto 2px 9px;
}
.dock-btn {
  display: flex;
  align-items: center;
  justify-content: center;
  width: 38px;
  height: 25px;
}
.dock-btn + .dock-btn {
  margin-top: 3px;
}

/* panels */
.panels {
  flex: none;
  display: flex;
  flex-direction: column;
  width: 241px;
  margin-left: 2px;
  padding-right: 1px;
  background: #535353;
}
.ptabs {
  flex: none;
  display: flex;
  align-items: stretch;
  height: 17px;
  background: #3c3c3c;
}
.ptab {
  width: 40px;
  border-right: 1px solid #303030;
  color: #9a9a9a;
  line-height: 17px;
}
.ptab.on {
  background: #535353;
  color: #e8e8e8;
}
.pmenu {
  width: 9px;
  height: 7px;
  margin: 5px 4px 0 auto;
  background: repeating-linear-gradient(#ccc 0 1px, transparent 1px 2px);
}
.pmenu::before {
  content: '';
  display: block;
  width: 0;
  margin: 2px 0 0 -6px;
  border: 3px solid transparent;
  border-top-color: #ccc;
  border-bottom: 0;
}
.adjust {
  flex: none;
  height: 115px;
  padding-top: 6px;
  border-bottom: 2px solid #2e2e2e;
}
.add {
  padding-left: 9px;
  color: #fff;
}
.adj-row {
  display: flex;
  justify-content: center;
  gap: 4px;
  height: 20px;
  margin: 7px 31px 7px 0;
}
.add + .adj-row {
  margin-top: 6px;
}
.adj {
  width: 20px;
  height: 20px;
}
.prow {
  flex: none;
  display: flex;
  align-items: center;
  height: 28px;
  padding: 0 5px;
  border-bottom: 1px solid #393939;
}
.prow.lock-row {
  height: 31px;
  padding: 0 5px 2px 7px;
}
.prow .drop {
  padding: 0 3px 0 8px;
}
.prow .kind {
  width: 70px;
  gap: 3px;
}
.filters {
  display: flex;
  gap: 4px;
  margin-left: 17px;
}
.toggle {
  width: 9px;
  height: 17px;
  margin-left: auto;
  border: 1px solid #333;
  background: linear-gradient(#8a8a8a 0 45%, #3c3c3c 45%);
}
.prow .blend {
  width: 110px;
}
.pct {
  display: flex;
  align-items: center;
  margin-left: auto;
  white-space: nowrap;
}
.pct input {
  width: 36px;
  height: 20px;
  margin-left: 5px;
  padding-left: 4px;
  background: #3a3a3a;
}
.pct-btn {
  display: flex;
  align-items: center;
  justify-content: center;
  width: 20px;
  height: 20px;
  border: 1px solid #303030;
  background: linear-gradient(#767676, #606060);
}
.locks {
  display: flex;
  gap: 2px;
  margin-left: 6px;
}
.layers {
  flex: 1;
  min-height: 0;
  display: flex;
}
.layer-list {
  flex: 1;
  background: #464646;
}
.layer-scroll {
  width: 15px;
  background: #414141;
}
.layer {
  display: flex;
  height: 34px;
  border-bottom: 1px solid #353535;
  background: #535353;
}
.layer.tall {
  height: 38px;
}
.vis {
  display: flex;
  align-items: center;
  justify-content: center;
  width: 31px;
  border-right: 1px solid #3a3a3a;
}
.layer-body {
  flex: 1;
  display: flex;
  align-items: center;
  gap: 7px;
  padding: 0 12px 0 1px;
}
.selected {
  background: #6b7f99;
}
.thumb {
  width: 32px;
  height: 25px;
  margin: 0 4px 0 2px;
  border: 1px solid #111;
  background: #fff;
}
.end {
  margin-left: auto;
}
.pfoot {
  flex: none;
  display: flex;
  align-items: center;
  gap: 7px;
  height: 19px;
  padding-left: 34px;
  border-top: 1px solid #6a6a6a;
}
.fx {
  width: 20px;
  padding-left: 5px;
  font: italic 14px/18px 'Liberation Serif', serif;
}

/* system task bar */
.taskbar {
  flex: none;
  display: flex;
  justify-content: space-between;
  height: 8px;
  overflow: hidden;
  background: linear-gradient(90deg, #21353f, #1f2f4e);
}
.task {
  width: 160px;
  margin-left: 1225px;
  background: #49606f;
}
.clock {
  width: 104px;
  line-height: 20px;
}

/* overlays */
.watermark {
  position: absolute;
  right: 14px;
  bottom: 7px;
  width: 190px;
  height: 50px;
  pointer-events: none;
}
.feather,
.wm-name,
.wm-sub,
.wm-url {
  position: absolute;
}
.wm-name {
  left: 68px;
  top: 1px;
  font-size: 30px;
  font-weight: 900;
  line-height: 34px;
  color: #a4b4c8;
  white-space: nowrap;
}
.wm-sub {
  right: 2px;
  top: 10px;
  font-size: 14px;
  font-weight: bold;
  color: #4b86c0;
}
.wm-url {
  right: 0;
  bottom: 0;
  font: 16px/18px 'Liberation Sans', sans-serif;
  color: #3f9d5a;
}
.ime {
  position: absolute;
  right: 3px;
  bottom: 11px;
  display: flex;
  align-items: center;
  justify-content: center;
  gap: 3px;
  width: 60px;
  height: 25px;
  border-radius: 4px;
  background: rgba(255, 255, 255, 0.95);
  color: #333;
  font-size: 14px;
}
.marks {
  position: absolute;
  inset: 0;
  z-index: 6;
  width: 100%;
  height: 100%;
  pointer-events: none;
}
.marks g {
  filter: drop-shadow(2px 3px 2px rgba(0, 0, 0, 0.6));
}
.marks line {
  stroke: #e20b0b;
  stroke-width: 3;
}
.marks polygon {
  fill: #f00;
}
.cursor {
  fill: #fff;
  stroke: #333;
}
</style>
